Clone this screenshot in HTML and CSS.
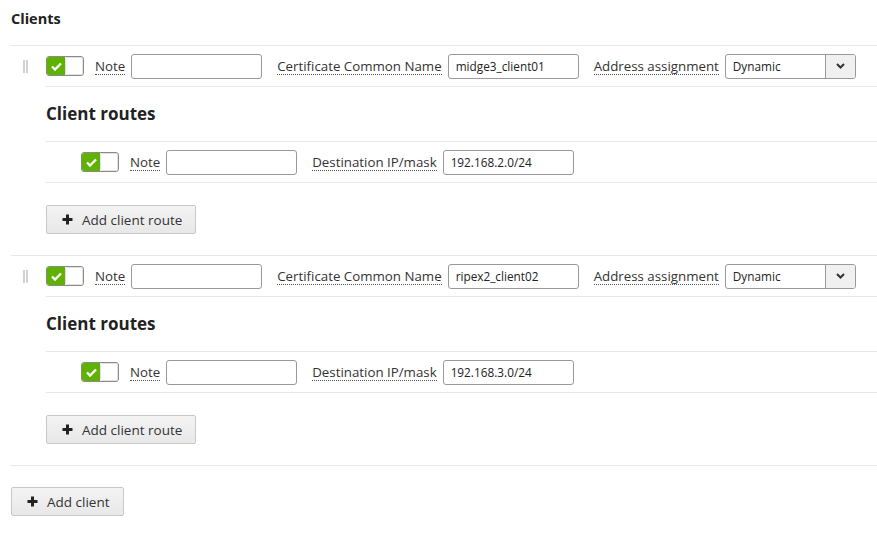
FILE: index.html
```html
<!DOCTYPE html>
<html>
<head>
<meta charset="utf-8">
<link rel="stylesheet" href="styles.css">
</head>
<body>
<div class="page">
  <h2 class="title">Clients</h2>

  <div class="client">
    <div class="row">
      <span class="handle"></span>
      <span class="toggle"><span class="on"><svg width="11" height="9" viewBox="0 0 11 9"><path d="M1 4.5 L4 7.5 L10 1.5" fill="none" stroke="#fff" stroke-width="2.4"/></svg></span><span class="off"></span></span>
      <span class="lbl">Note</span><input class="inp" type="text" value="">
      <span class="lbl">Certificate Common Name</span><input class="inp" type="text" value="midge3_client01">
      <span class="lbl">Address assignment</span>
      <span class="select"><span class="sel-val">Dynamic</span><span class="sel-btn"><svg width="9" height="6" viewBox="0 0 9 6"><path d="M1 1 L4.5 4.5 L8 1" fill="none" stroke="#333" stroke-width="2"/></svg></span></span>
    </div>
    <div class="routes">
      <h3 class="sub">Client routes</h3>
      <div class="row route">
        <span class="toggle"><span class="on"><svg width="11" height="9" viewBox="0 0 11 9"><path d="M1 4.5 L4 7.5 L10 1.5" fill="none" stroke="#fff" stroke-width="2.4"/></svg></span><span class="off"></span></span>
        <span class="lbl">Note</span><input class="inp" type="text" value="">
        <span class="lbl">Destination IP/mask</span><input class="inp" type="text" value="192.168.2.0/24">
      </div>
      <div class="btn-wrap"><button class="btn"><svg width="11" height="11" viewBox="0 0 11 11"><path d="M5.5 0.5 V10.5 M0.5 5.5 H10.5" stroke="#222" stroke-width="3"/></svg>Add client route</button></div>
    </div>
  </div>

  <div class="client">
    <div class="row">
      <span class="handle"></span>
      <span class="toggle"><span class="on"><svg width="11" height="9" viewBox="0 0 11 9"><path d="M1 4.5 L4 7.5 L10 1.5" fill="none" stroke="#fff" stroke-width="2.4"/></svg></span><span class="off"></span></span>
      <span class="lbl">Note</span><input class="inp" type="text" value="">
      <span class="lbl">Certificate Common Name</span><input class="inp" type="text" value="ripex2_client02">
      <span class="lbl">Address assignment</span>
      <span class="select"><span class="sel-val">Dynamic</span><span class="sel-btn"><svg width="9" height="6" viewBox="0 0 9 6"><path d="M1 1 L4.5 4.5 L8 1" fill="none" stroke="#333" stroke-width="2"/></svg></span></span>
    </div>
    <div class="routes">
      <h3 class="sub">Client routes</h3>
      <div class="row route">
        <span class="toggle"><span class="on"><svg width="11" height="9" viewBox="0 0 11 9"><path d="M1 4.5 L4 7.5 L10 1.5" fill="none" stroke="#fff" stroke-width="2.4"/></svg></span><span class="off"></span></span>
        <span class="lbl">Note</span><input class="inp" type="text" value="">
        <span class="lbl">Destination IP/mask</span><input class="inp" type="text" value="192.168.3.0/24">
      </div>
      <div class="btn-wrap"><button class="btn"><svg width="11" height="11" viewBox="0 0 11 11"><path d="M5.5 0.5 V10.5 M0.5 5.5 H10.5" stroke="#222" stroke-width="3"/></svg>Add client route</button></div>
    </div>
  </div>

  <div class="footer">
    <button class="btn"><svg width="11" height="11" viewBox="0 0 11 11"><path d="M5.5 0.5 V10.5 M0.5 5.5 H10.5" stroke="#222" stroke-width="3"/></svg>Add client</button>
  </div>
</div>
</body>
</html>
```

FILE: styles.css
```css
html, body {
  margin: 0;
  padding: 0;
  background: #fff;
}
body {
  font-family: "Open Sans", "Noto Sans", sans-serif;
  color: #333;
  font-size: 13.3px;
}
.page {
  padding: 0 0 0 11px;
}
.title {
  margin: 0;
  height: 45px;
  padding-top: 9px;
  box-sizing: border-box;
  font-size: 14.5px;
  font-weight: 700;
  color: #222;
  line-height: 20px;
}
.client {
  border-top: 1px solid #e6e6e6;
}
.row {
  display: flex;
  align-items: center;
  height: 40px;
}
.handle {
  width: 5px;
  height: 13px;
  margin-left: 12px;
  margin-right: 18px;
  border-left: 2px solid #d2d2d2;
  border-right: 2px solid #d2d2d2;
  box-sizing: border-box;
}
.toggle {
  display: flex;
  width: 38px;
  height: 20px;
  border: 1px solid #8a8a8a;
  border-radius: 3px;
  box-sizing: border-box;
  overflow: hidden;
  margin-right: 11px;
}
.toggle .on {
  width: 18px;
  background: #5fb300;
  display: flex;
  align-items: center;
  justify-content: center;
}
.toggle .off {
  flex: 1;
  background: #fff;
  border: 1px solid #e2e2e2;
  border-radius: 2px;
}
.lbl {
  border-bottom: 1px dotted #555;
  line-height: 15px;
  padding-top: 1px;
  margin-right: 6px;
  color: #333;
  white-space: nowrap;
}
.inp {
  width: 131px;
  height: 25px;
  box-sizing: border-box;
  border: 1px solid #999;
  border-radius: 3px;
  padding: 0 0 0 7px;
  font-family: "Open Sans", "Noto Sans", sans-serif;
  font-size: 11.8px;
  color: #222;
  margin: 0 15px 0 0;
  outline: none;
}
.select {
  display: flex;
  width: 131px;
  height: 25px;
  box-sizing: border-box;
  border: 1px solid #999;
  border-radius: 3px;
  overflow: hidden;
}
.sel-val {
  flex: 1;
  padding-left: 7px;
  font-size: 11.8px;
  line-height: 23px;
  color: #222;
}
.sel-btn {
  width: 29px;
  border-left: 1px solid #999;
  background: #f0f0f0;
  display: flex;
  align-items: center;
  justify-content: center;
}
.routes {
  margin-left: 35px;
  border-top: 1px solid #e6e6e6;
}
.sub {
  margin: 0;
  height: 54px;
  box-sizing: border-box;
  padding-top: 15px;
  font-size: 17px;
  font-weight: 700;
  color: #222;
  line-height: 24px;
}
.route {
  border-top: 1px solid #e6e6e6;
  border-bottom: 1px solid #e6e6e6;
  padding-left: 35px;
}
.btn-wrap {
  padding: 22px 0 21px;
}
.btn {
  display: inline-flex;
  align-items: center;
  gap: 9px;
  height: 29px;
  padding: 0 13px 0 15px;
  border: 1px solid #c8c8c8;
  border-radius: 2px;
  background: linear-gradient(#f3f3f3, #e8e8e8);
  font-family: "Open Sans", "Noto Sans", sans-serif;
  font-size: 13.5px;
  color: #333;
  cursor: pointer;
}
.footer {
  border-top: 1px solid #e6e6e6;
  padding-top: 21px;
}
```
